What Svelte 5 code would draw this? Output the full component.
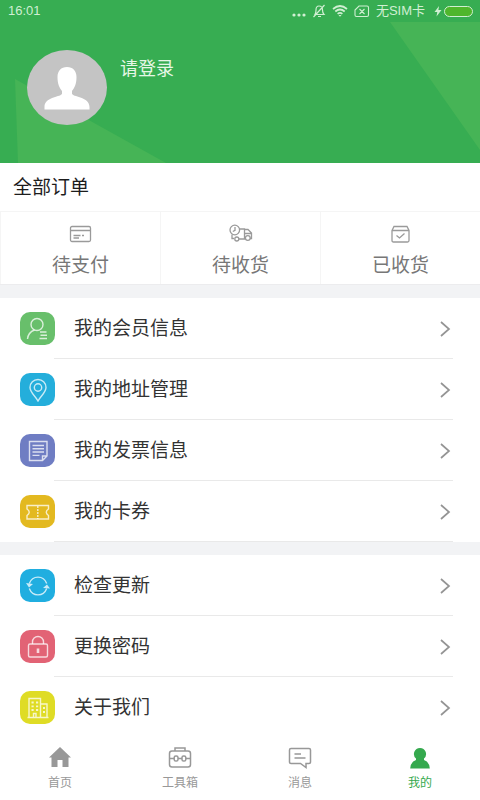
<script>
    let activeTab = 'mine';

    const orders = [
        { id: 'pay', label: '待支付' },
        { id: 'ship', label: '待收货' },
        { id: 'done', label: '已收货' }
    ];

    const groups = [
        [
            { id: 'member', label: '我的会员信息' },
            { id: 'address', label: '我的地址管理' },
            { id: 'invoice', label: '我的发票信息' },
            { id: 'coupon', label: '我的卡券' }
        ],
        [
            { id: 'update', label: '检查更新' },
            { id: 'password', label: '更换密码' },
            { id: 'about', label: '关于我们' }
        ]
    ];

    const tabs = [
        { id: 'home', label: '首页' },
        { id: 'tools', label: '工具箱' },
        { id: 'message', label: '消息' },
        { id: 'mine', label: '我的' }
    ];
</script>

<div class="page">
    <header class="hero">
        <svg class="hero-bg" viewBox="0 0 480 163" preserveAspectRatio="none" aria-hidden="true">
            <path d="M15 79 L18 163 H166Z M390 22 H480 V150Z" fill="#46b456" />
        </svg>
        <div class="status-bar">
            <span>16:01</span>
            <div class="status-icons">
                <svg width="14" height="14" viewBox="0 0 14 14" fill="currentColor">
                    <circle cx="2" cy="11" r="1.6" /><circle cx="7" cy="11" r="1.6" /><circle cx="12" cy="11" r="1.6" />
                </svg>
                <svg width="14" height="14" viewBox="0 0 14 14" fill="none" stroke="currentColor" stroke-width="1.2">
                    <path d="M3 10.5 Q4 9 4 6 Q4 2 7 2 Q10.5 2 10.5 6 Q10.5 9 12 10.5Z M6 12.5 H9 M12.5 1 L1.5 13" />
                </svg>
                <svg width="16" height="14" viewBox="0 0 16 14" fill="none" stroke="currentColor" stroke-width="1.7">
                    <path d="M1 5 Q8 -1 15 5 M3.3 7.5 Q8 3.5 12.7 7.5 M5.6 9.8 Q8 7.8 10.4 9.8" />
                    <path d="M6.5 11 H9.5 L8 12.8Z" fill="currentColor" stroke="none" />
                </svg>
                <svg width="16" height="14" viewBox="0 0 16 14" fill="none" stroke="currentColor" stroke-width="1.1">
                    <path d="M5 2 H13 Q14.5 2 14.5 3.5 V11 Q14.5 12.5 13 12.5 H2.5 Q1 12.5 1 11 V6Z M5.5 5 L10.5 10 M10.5 5 L5.5 10" />
                </svg>
                <span class="sim">无SIM卡</span>
                <svg class="bolt" width="8" height="14" viewBox="0 0 8 14" fill="currentColor">
                    <path d="M5 2 L0.5 8 H3.3 L2.5 12.5 L7.5 6 H4.4Z" />
                </svg>
                <span class="battery"></span>
            </div>
        </div>
        <div class="profile">
            <div class="avatar">
                <svg width="46" height="44" viewBox="0 0 46 44" fill="#fff">
                    <path d="M23 1 C29 1 32.5 5 32.5 11 C32.5 18 30.5 22 28 25 V28 C31 31.5 45.5 31 45.5 41 V43.5 H0.5 V41 C0.5 31 15 31.5 18 28 V25 C15.5 22 13.5 18 13.5 11 C13.5 5 17 1 23 1Z" />
                </svg>
            </div>
            <a class="login" href="#login">请登录</a>
        </div>
    </header>

    <main>
        <h2>全部订单</h2>
        <div class="orders">
            {#each orders as order}
                <button class="order">
                    <svg width="24" height="20" viewBox="0 0 24 20" fill="none" stroke="#9a9a9a" stroke-width="1.3">
                        {#if order.id === 'pay'}
                            <rect x="1.5" y="2.5" width="20" height="15" rx="1.5" />
                            <path d="M1.5 6.5 H21.5 M4.5 11.5 H11.5 M13 11.5 H15 M4.5 14 H10" />
                        {:else if order.id === 'ship'}
                            <circle cx="5.8" cy="6" r="4.8" />
                            <path d="M6 3 V6.3 L3.8 7.5 M10.5 5 H15.5 V15 H10 M3 10.5 V14.5 H5 M15.5 5.5 H19 L22.5 9 V14.5 H21 M15.5 9.5 H22" />
                            <circle cx="7.8" cy="15" r="2" /><circle cx="18.8" cy="14" r="2.4" />
                        {:else}
                            <path d="M3 6.5 L5 2.5 H18 L20 6.5 V16.5 Q20 18 18.5 18 H4.5 Q3 18 3 16.5Z M3 6.5 H20 M7.5 11.5 L10.5 14 L15.5 9.5" />
                        {/if}
                    </svg>
                    <span>{order.label}</span>
                </button>
            {/each}
        </div>

        {#each groups as group}
            <ul class="menu">
                {#each group as item}
                    <li>
                        <a class="row" href="#{item.id}">
                            <span class="tile {item.id}">
                                <svg width="26" height="24" viewBox="0 0 26 24" fill="none" stroke="currentColor" stroke-width="1.4">
                                    {#if item.id === 'member'}
                                        <circle cx="12" cy="7.5" r="6" />
                                        <path d="M2.5 22 C3 17 5.5 14.5 9.5 13 M15 15 H21.5 M15.5 18.2 H22 M14.5 21.5 H22" />
                                    {:else if item.id === 'address'}
                                        <path d="M13 23 C10.5 18 5 14.5 5 9.5 A8 8 0 0 1 21 9.5 C21 14.5 15.5 18 13 23Z" />
                                        <circle cx="13" cy="9.5" r="3.7" />
                                    {:else if item.id === 'invoice'}
                                        <path d="M4.5 2.5 H22 V17 L17.5 21.5 H4.5Z M17.5 21.5 V17 H22 M7.5 6.5 H19 M7.5 9.8 H19 M7.5 13 H19 M7.5 16.4 H14.5" />
                                    {:else if item.id === 'coupon'}
                                        <path d="M2 5.5 H23.5 V9 Q19 12.2 23.5 15.5 V19 H2 V15.5 Q6.5 12.2 2 9Z" />
                                        <path d="M12.8 6 V19" stroke-dasharray="2 1" />
                                    {:else if item.id === 'update'}
                                        <path d="M4.3 9.5 C7.5 1 18.5 1 21.7 9.5 M21.7 14.5 C18.5 23 7.5 23 4.3 14.5" />
                                        <path d="M1 9 L8 10 L4 13.5Z M18 14 L22 10.5 L25 14.5Z" fill="currentColor" stroke="none" />
                                    {:else if item.id === 'password'}
                                        <rect x="3.5" y="9" width="19" height="13" rx="1.5" />
                                        <path d="M7.5 9 V7 A5.5 5.5 0 0 1 18.5 7 V9" />
                                        <path d="M13 13.5 V18" stroke-width="2.6" />
                                    {:else}
                                        <path d="M4 21.5 V2.5 H15.5 V21.5 M15.5 8 H22 V21.5 M2.5 21.5 H23.5 M8.5 21 V17.5 H11 V21" />
                                        <path d="M6.5 6.5 H8.7 M11 6.5 H13.2 M6.5 10.3 H8.7 M11 10.3 H13.2 M6.5 14 H8.7 M11 14 H13.2 M18 12 H20 M18 16 H20" stroke-width="1.8" />
                                    {/if}
                                </svg>
                            </span>
                            <span class="label">{item.label}</span>
                            <svg width="12" height="16" viewBox="0 0 12 16" fill="none" stroke="#949494" stroke-width="1.7">
                                <path d="M2 1 L10 8 L2 15" />
                            </svg>
                        </a>
                    </li>
                {/each}
            </ul>
        {/each}
    </main>

    <nav class="tabs">
        {#each tabs as tab}
            <button class="tab" class:active={activeTab === tab.id} on:click={() => (activeTab = tab.id)}>
                <svg width="24" height="24" viewBox="0 0 24 24" fill="none" stroke="currentColor" stroke-width="1.5">
                    {#if tab.id === 'home'}
                        <path d="M12 1 L23 11.5 H20.5 V21 H14.5 V14 H9.5 V21 H3.5 V11.5 H1Z" fill="currentColor" stroke="none" />
                    {:else if tab.id === 'tools'}
                        <rect x="1.5" y="5" width="21" height="16" rx="2.5" />
                        <path d="M7 5 V2 H17 V5 M2 12.5 H6 M10 12.5 H14 M18 12.5 H22" />
                        <rect x="6.2" y="10" width="3.8" height="5" rx="1.6" />
                        <rect x="14" y="10" width="3.8" height="5" rx="1.6" />
                    {:else if tab.id === 'message'}
                        <path d="M3 2.5 H21 Q22.5 2.5 22.5 4 V16 Q22.5 17.5 21 17.5 H18 V21.5 L12.5 17.5 H3 Q1.5 17.5 1.5 16 V4 Q1.5 2.5 3 2.5Z M6.5 8 H13 M6.5 12 H17.5" />
                    {:else}
                        <path d="M12 2 A6 6 0 0 1 16 12.5 V14 Q21.5 16 21.8 22.5 H2.2 Q2.5 16 8 14 V12.5 A6 6 0 0 1 12 2Z" fill="currentColor" stroke="none" />
                    {/if}
                </svg>
                <span>{tab.label}</span>
            </button>
        {/each}
    </nav>
</div>

<style>
    :global(body) {
        margin: 0;
        background: #fff;
    }

    .page {
        min-height: 100vh;
        display: flex;
        flex-direction: column;
        font-family: "Liberation Sans", "Noto Sans CJK SC", sans-serif;
        color: #333;
        background: #fff;
    }

    button {
        border: 0;
        padding: 0;
        background: none;
        font-family: inherit;
        cursor: pointer;
    }

    a {
        color: inherit;
        text-decoration: none;
    }

    svg {
        display: block;
        flex: none;
    }

    .hero {
        position: relative;
        padding-bottom: 38px;
        background: #37ad52;
    }

    .hero-bg {
        position: absolute;
        inset: 0;
        width: 100%;
        height: 100%;
    }

    .status-bar {
        position: relative;
        display: flex;
        align-items: center;
        justify-content: space-between;
        height: 22px;
        padding: 0 7px 0 8px;
        font-size: 13px;
        line-height: 20px;
        color: #d0efd2;
    }

    .status-icons {
        display: flex;
        align-items: center;
        gap: 6px;
    }

    .sim {
        margin-right: 3px;
    }

    .bolt {
        margin-right: -4px;
    }

    .battery {
        box-sizing: border-box;
        width: 29px;
        height: 11px;
        border: 1px solid #d0efd2;
        border-radius: 6px;
        background: #4fb62c;
    }

    .profile {
        position: relative;
        display: flex;
        gap: 13px;
        padding: 28px 27px 0;
    }

    .avatar {
        display: flex;
        align-items: center;
        justify-content: center;
        width: 80px;
        height: 75px;
        border-radius: 50%;
        background: #c4c4c4;
    }

    .login {
        margin-top: 5px;
        font-size: 18px;
        line-height: 28px;
        color: #e6f7e6;
    }

    main {
        flex: 1;
    }

    h2 {
        margin: 0;
        padding: 2px 13px 0;
        font-size: 19px;
        font-weight: 400;
        line-height: 46px;
        color: #1c1c1c;
    }

    .orders {
        display: grid;
        grid-template-columns: repeat(3, 1fr);
        border-top: 1px solid #f5f5f5;
        border-bottom: 1px solid #ececee;
    }

    .order {
        display: flex;
        flex-direction: column;
        align-items: center;
        gap: 8px;
        padding: 12px 0 4px;
        border-left: 1px solid #f5f5f5;
        font-size: 19px;
        line-height: 28px;
        color: #777;
    }

    .menu {
        margin: 0;
        padding: 0;
        border-top: 13px solid #f2f3f5;
        list-style: none;
    }

    .row {
        position: relative;
        display: flex;
        align-items: center;
        height: 61px;
        padding: 0 29px 0 20px;
    }

    .row::after {
        content: '';
        position: absolute;
        left: 54px;
        right: 27px;
        bottom: 0;
        height: 1px;
        background: #e9e9e9;
    }

    .menu:last-child li:last-child .row::after {
        display: none;
    }

    .tile {
        display: flex;
        align-items: center;
        justify-content: center;
        width: 35px;
        height: 33px;
        border-radius: 10px;
        color: #ffffffc0;
    }

    .member { background: #68bf6b; }
    .address { background: #24aedb; }
    .invoice { background: #6f7dc3; }
    .coupon { background: #e3b920; }
    .update { background: #20aee0; }
    .password { background: #e26375; }
    .about { background: #dfdc25; }

    .label {
        flex: 1;
        margin-left: 19px;
        font-size: 19px;
        line-height: 28px;
    }

    .tabs {
        display: grid;
        grid-template-columns: repeat(4, 1fr);
        padding: 6px 0 8px;
    }

    .tab {
        display: flex;
        flex-direction: column;
        align-items: center;
        gap: 4px;
        font-size: 12px;
        line-height: 18px;
        color: #989898;
    }

    .active {
        color: #35a94e;
    }
</style>
